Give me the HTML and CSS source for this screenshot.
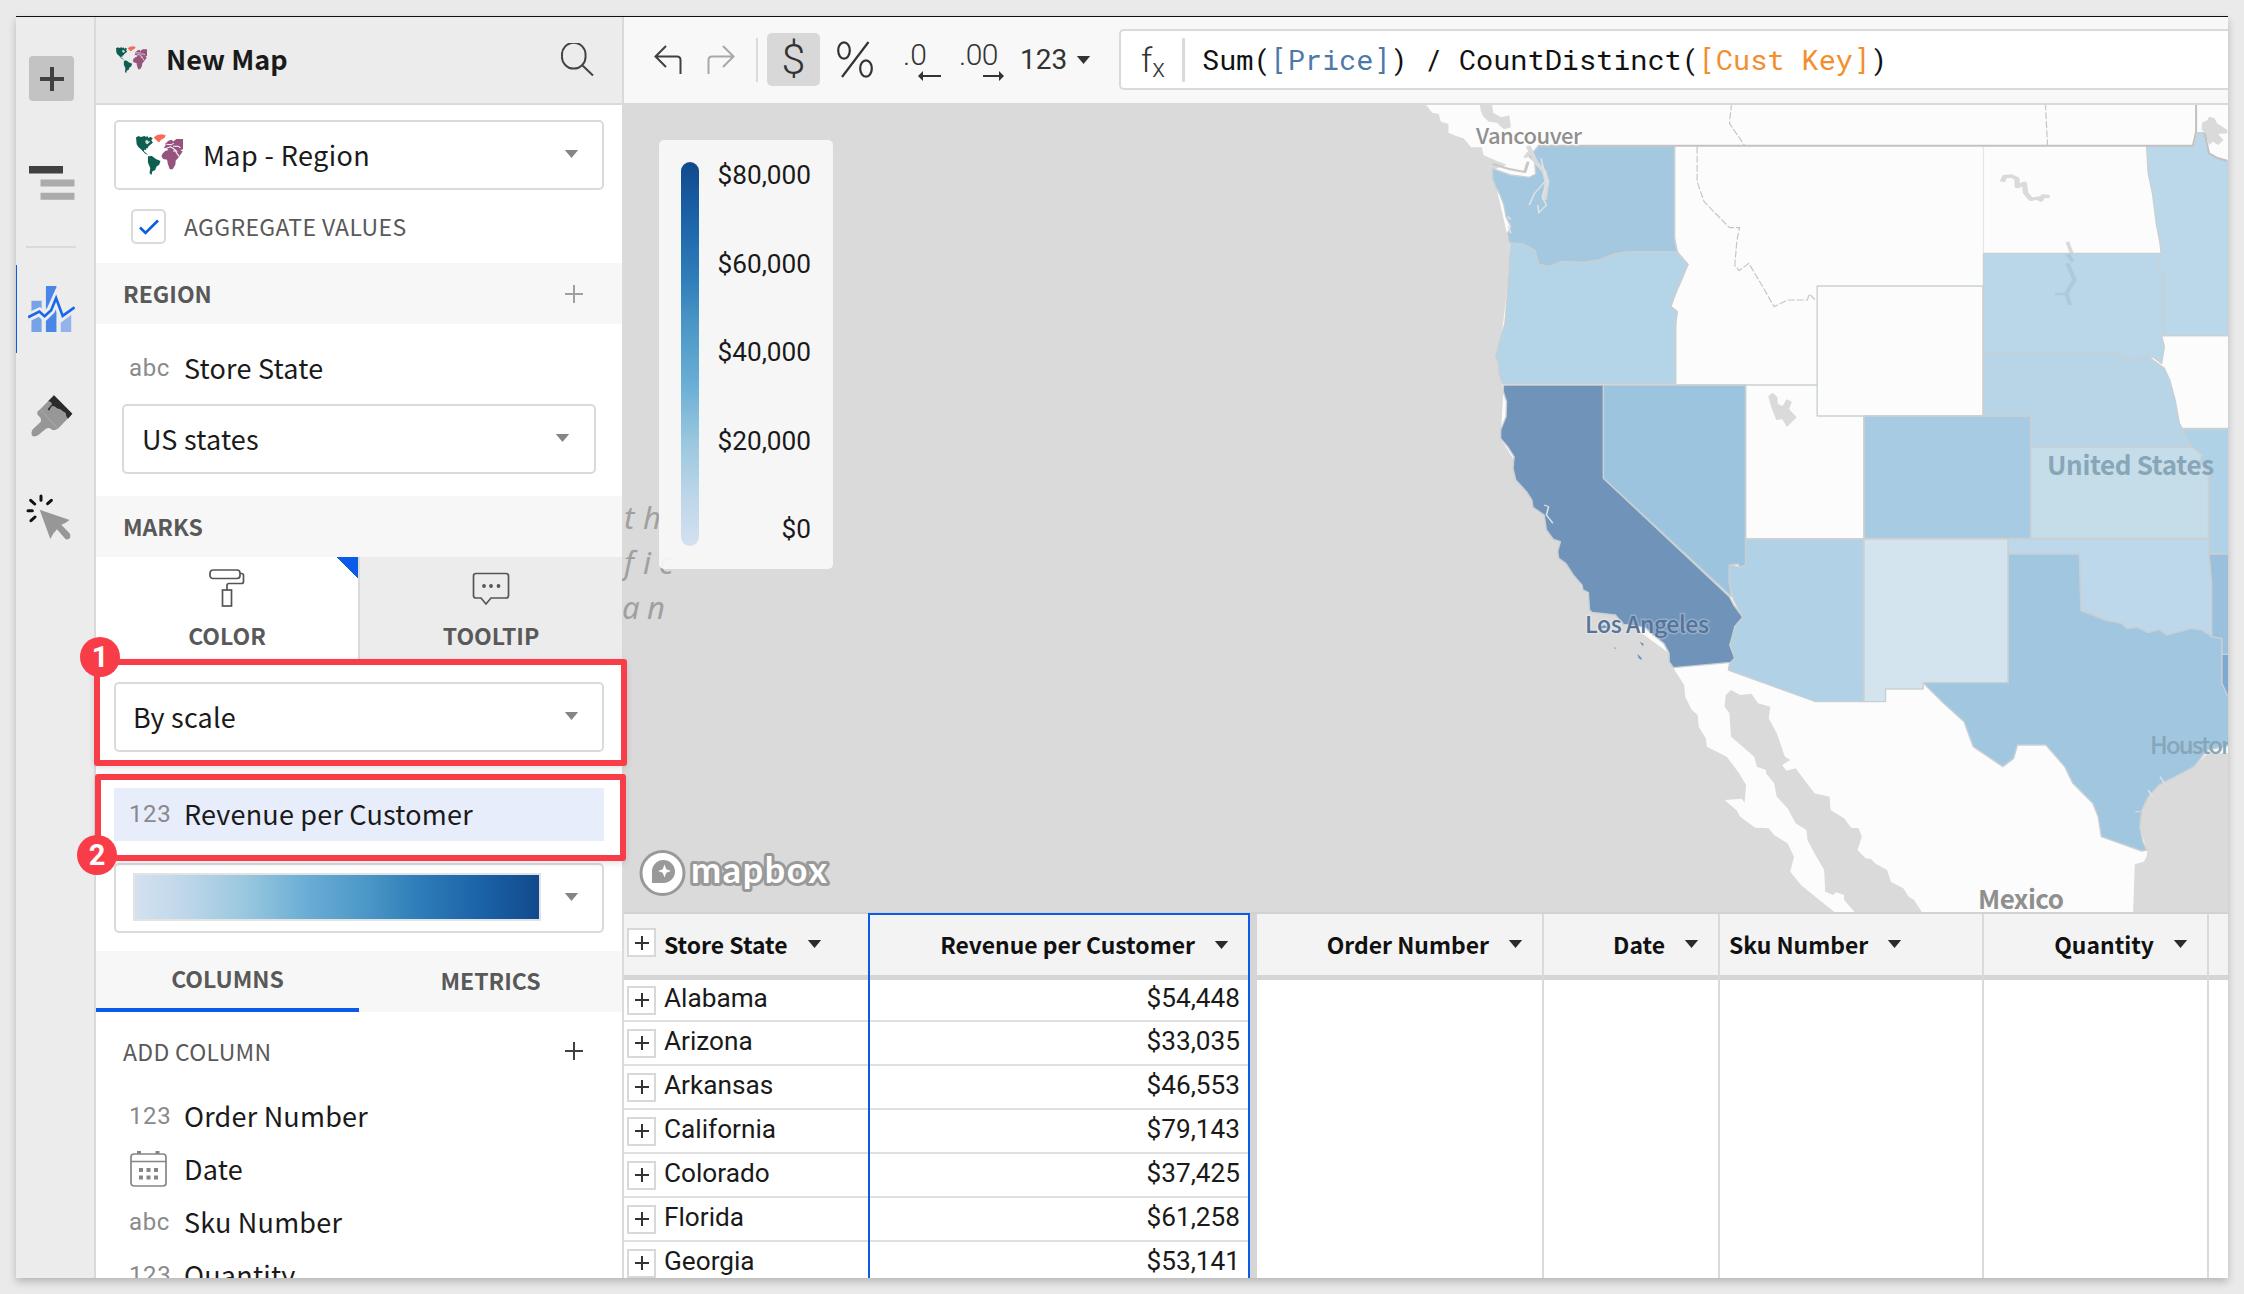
FILE: index.html
```html
<!DOCTYPE html>
<html lang="en">
<head>
<meta charset="utf-8">
<title>New Map</title>
<link rel="stylesheet" href="styles.css">
</head>
<body>
<svg class="defs" aria-hidden="true">
  <symbol id="world" viewBox="0 0 142 121" preserveAspectRatio="none">
    <path fill="#0e5f50" d="M0 10L8 6 14 9 26 6 30 9 34 6 38 12 44 8 51 14 46 18 51 26 45 30 38 36 35 42 30 43 31 48 25 46 24 51 30 56 37 62 28 58 20 50 14 44 7 38 2 30Z"/>
    <path fill="#0e5f50" d="M36 66L48 65 60 74 74 80 70 91 62 96 58 106 49 111 47 121 41 116 43 100 36 84Z"/>
    <path fill="#fff" opacity=".8" d="M28 20l6 -3 3 5 5 -2 -2 6 -6 4 -5 -3z"/>
    <path fill="#f96a58" d="M53 10L64 3 78 1 90 4 86 12 76 17 69 25 61 18Z"/>
    <path fill="#96537e" d="M84 42L90 32 88 29 98 20 108 17 112 22 122 15 142 15 142 45 134 47 141 52 131 66 126 72 120 78 119 90 111 104 102 104 96 88 94 76 82 74 77 66 80 58 88 50 98 47 92 42Z"/>
    <path fill="none" stroke="#fff" stroke-width="3" d="M86 44L104 38 112 42 122 50 112 50M120 52L130 66M92 30L106 32 114 27M112 36h16l6 5"/>
  </symbol>
  <symbol id="caret" viewBox="0 0 15 9"><path fill="currentColor" d="M0 0H15L7.500 9Z"/></symbol>
  <symbol id="plus" viewBox="0 0 18 18"><path fill="none" stroke="currentColor" stroke-width="2" d="M9 0V18M0 9H18"/></symbol>
</svg>

<div class="window">
  <nav class="rail">
    <button class="rail-add"><svg width="24" height="24" viewBox="0 0 24 24"><path stroke="#404040" stroke-width="4" d="M12 0V24M0 12H24"/></svg></button>
    <svg class="rail-outline" width="46" height="34" viewBox="0 0 46 34"><path fill="#404040" d="M0 0h34v7.500H0z"/><path fill="#ababab" d="M11.500 13.500H45.500v7H11.500zM11.500 26.800H45.500v7H11.500z"/></svg>
    <i class="rail-line"></i>
    <div class="rail-active"><svg width="47" height="48" viewBox="36 705 142 146">
      <path fill="#76a2e9" d="M46 753h31v95H46z"/><path fill="#4a86e8" d="M90 708h32v140H90z"/><path fill="#93b3ea" d="M135 780h32v68h-32z"/>
      <path fill="none" stroke="#ececec" stroke-width="26" d="M30 806L70 787 86 800 105 782 121 746 141 799 182 768"/>
      <path fill="none" stroke="#1a68ea" stroke-width="8" d="M36 803L70 786 86 800 106 782 121 745 141 799 177 773"/></svg></div>
    <svg class="rail-brush" width="42" height="42" viewBox="44 1034 126 126"><path fill="#979797" d="M113 1035L168 1090 130 1130Q116 1146 104 1136 96 1130 88 1136L66 1154Q58 1161 48 1157 42 1146 50 1136L72 1116Q78 1106 68 1098 56 1086 70 1078Z"/><path fill="#2b2b2b" d="M113 1035L168 1090 155 1105Q148 1097 148 1088 140 1084 132 1077L122 1074Q113 1064 106 1068L98 1081 94 1077 107 1062Q106 1054 96 1052Z"/><path stroke="#b5b5b5" stroke-width="2" d="M74 1080L126 1136"/></svg>
    <svg class="rail-cursor" width="46" height="46" viewBox="31 1332 138 138"><path fill="#979797" d="M72 1379L162 1410Q150 1420 137 1424L163 1451Q168 1470 150 1468L124 1438Q112 1450 104 1467Z"/><path stroke="#111" stroke-width="9" stroke-linecap="round" d="M76 1338V1351M45 1351L57 1362M107 1351L96 1361M37 1382H50M58 1401L46 1412"/></svg>
  </nav>

  <aside class="panel">
    <header class="panel-head">
      <svg width="31" height="27"><use href="#world"/></svg>
      <h1>New Map</h1>
      <svg class="search" width="33" height="34" viewBox="0 0 33 34"><path fill="none" stroke="#444" stroke-width="2" d="M21 22L32 32.500M24.500 12.700A11.800 11.800 0 1 1 1 12.700A11.800 11.800 0 1 1 24.500 12.700Z"/></svg>
    </header>

    <div class="select with-icon"><svg width="47" height="41"><use href="#world"/></svg><span>Map - Region</span><svg class="caret"><use href="#caret"/></svg></div>
    <label class="check-row"><span class="box"><svg width="20" height="16" viewBox="0 0 20 16"><path fill="none" stroke="#0b5ce8" stroke-width="2.600" d="M1 8.500L6.500 14 19 1.500"/></svg></span><span class="check-text">AGGREGATE VALUES</span></label>

    <div class="section"><b>REGION</b><svg class="plus muted"><use href="#plus"/></svg></div>
    <div class="field store"><i class="kind">abc</i><span>Store State</span></div>
    <div class="select inner"><span>US states</span><svg class="caret"><use href="#caret"/></svg></div>

    <div class="section marks"><b>MARKS</b></div>
    <div class="mark-tabs">
      <div class="mark-tab on"><svg width="36" height="38" viewBox="0 0 36 38"><g fill="none" stroke="#555" stroke-width="1.700"><rect x="1" y="1" width="30" height="8.500" rx="3"/><path d="M31 4.500h1.500q2 0 2 2v6q0 2-2 2H20q-2 0-2 2V21"/><rect x="13.500" y="21" width="9" height="16"/></g></svg><b>COLOR</b></div>
      <div class="mark-tab"><svg width="38" height="38" viewBox="0 0 38 38"><path fill="none" stroke="#555" stroke-width="1.700" d="M4 4.500H34q2.500 0 2.500 2.500V26.500q0 2.500-2.500 2.500H19L14 35 9 29H4Q1.500 29 1.500 26.500V7Q1.500 4.500 4 4.500Z"/><g fill="#555"><circle cx="12" cy="17" r="1.900"/><circle cx="19" cy="17" r="1.900"/><circle cx="26.500" cy="17" r="1.900"/></g></svg><b>TOOLTIP</b></div>
    </div>
    <div class="select scale"><span>By scale</span><svg class="caret"><use href="#caret"/></svg></div>
    <div class="field measure"><i class="kind">123</i><span>Revenue per Customer</span></div>
    <div class="select ramp"><i class="ramp-bar"></i><svg class="caret"><use href="#caret"/></svg></div>

    <div class="list-tabs"><b class="on">COLUMNS</b><b>METRICS</b></div>
    <div class="add-row"><span>ADD COLUMN</span><svg class="plus"><use href="#plus"/></svg></div>
    <div class="field"><i class="kind">123</i><span>Order Number</span></div>
    <div class="field"><i class="kind"><svg class="calendar" width="37" height="37" viewBox="0 0 37 37"><g fill="none" stroke="#858585" stroke-width="1.700"><rect x="1" y="4" width="35" height="32" rx="3"/><path d="M1 11.500H36"/></g><path fill="#858585" d="M7 1h4v3H7zM25.500 1h4v3h-4zM9 18h4v4H9zM16.500 18h4v4h-4zM24 18h4v4h-4zM9 25.500h4v4H9zM16.500 25.500h4v4h-4zM24 25.500h4v4h-4z"/></svg></i><span>Date</span></div>
    <div class="field"><i class="kind">abc</i><span>Sku Number</span></div>
    <div class="field"><i class="kind">123</i><span>Quantity</span></div>
  </aside>

  <main class="main">
    <div class="toolbar">
      <svg class="undo" width="28" height="30" viewBox="0 0 28 30"><path fill="none" stroke="#404040" stroke-width="2" d="M12 1L1.500 11.500 12 22M1.500 11.500H23Q26.500 11.500 26.500 15V29"/></svg>
      <svg class="redo" width="28" height="30" viewBox="0 0 28 30"><path fill="none" stroke="#a8a8a8" stroke-width="2" d="M16 1L26.500 11.500 16 22M26.500 11.500H5Q1.500 11.500 1.500 15V29"/></svg>
      <i class="tb-line"></i>
      <span class="tb-dollar">$</span>
      <svg class="tb-pct" width="36" height="37" viewBox="0 0 36 37"><g fill="none" stroke="#333" stroke-width="2.200"><ellipse cx="7" cy="9.500" rx="5.800" ry="8.200"/><ellipse cx="29" cy="27.500" rx="5.800" ry="8.200"/><path d="M31.500 1L5 36"/></g></svg>
      <span class="tb-dec less">.0<svg width="24" height="10" viewBox="0 0 24 10"><path fill="#333" d="M0 5L5 0V4H23V6H5V10Z"/></svg></span>
      <span class="tb-dec more">.00<svg width="21" height="10" viewBox="0 0 21 10"><path fill="#333" d="M21 5L16 0V4H0V6H16V10Z"/></svg></span>
      <span class="tb-123">123</span>
      <svg class="caret dark"><use href="#caret"/></svg>
      <div class="formula"><span class="fx">f<small>x</small></span><i></i><code>Sum(<span class="price">[Price]</span>) / CountDistinct(<span class="cust">[Cust Key]</span>)</code></div>
    </div>

    <div class="map">
      <svg class="map-canvas" width="1606" height="807" viewBox="0 0 1606 807">
        <g transform="translate(778 -15) scale(.53827 .33333)">
          <path fill="#fcfcfc" d="M46 40L60 68 72 72 76 95 90 102 90 128 103 137 118 145 132 172 152 172 155 195 180 213 205 228 228 237 233 225 230 198 240 180 257 190 172 240 180 300 203 460 203 540 183 820 192 905 187 1045 268 1260 340 1500 500 1690 508 1735 528 1785 530 1820 542 1860 553 1875 555 1910 568 1945 570 1970 607 2000 630 2050 643 2085 640 2138 635 2126 603 2130 625 2160 632 2180 660 2213 685 2215 695 2235 720 2260 732 2300 725 2345 745 2385 775 2425 808 2467H845L825 2430 825 2415 810 2407 805 2415 790 2405 788 2340 770 2290 757 2250 755 2220 735 2200 720 2155 700 2120 695 2080 680 2050 680 2040 663 2030 658 2000 640 1975 615 1940 612 1870 603 1850 605 1815 615 1800 632 1815 653 1811 665 1840 688 1850 685 1885 700 1930 715 2000 725 2010 710 2025 718 2042 735 2035 770 2110 798 2120 800 2160 825 2185 838 2213 852 2215 858 2240 850 2280 865 2305 875 2307 882 2320 905 2340 912 2375 935 2395 945 2420 955 2430 970 2467H1362L1365 2323 1382 2315 1387 2300 1388 2282 1374 2210 1380 2130 1410 2080 1475 2030 1500 1990H1540V40Z"/>
          <path fill="#dadada" d="M148 40H171L173 68 188 82 203 76 206 112 193 118 180 98 165 95 155 80 150 62ZM684 918L693 908 701 922 702 942 711 948 718 928 728 935 723 958 737 982 719 1011 710 988 699 990 691 958ZM1490 98L1500 90 1503 80 1513 84 1518 100 1537 120V130L1520 132 1530 150 1520 165 1510 155 1503 165 1495 128 1489 118Z"/>
          <g fill="none" stroke="#dadada" stroke-linejoin="round">
            <path stroke-width="10" d="M1119 275L1124 259 1136 258 1146 266 1147 290 1160 280 1162 308 1172 328 1186 324 1190 330 1195 318 1207 320"/>
            <path stroke-width="7" d="M1240 455L1250 500"/>
            <path stroke="#c9c9c9" stroke-width="6" d="M172 222L205 238 232 246 238 215"/>
          </g>
          <g fill="none" stroke="#c6c6c6" stroke-width="1.200">
            <path vector-effect="non-scaling-stroke" stroke-dasharray="7 2" d="M616 40L612 100 640 166M1199 40L1203 166M552 170V275L565 335 612 413H631L626 450 622 525 630 542 648 520 672 585 695 650 720 630H757L760 612 773 632"/>
            <path vector-effect="non-scaling-stroke" stroke="#e6e6e6" d="M1084 170V490"/>
          </g>
          <g class="states">
            <path fill="#a3c8e0" d="M257 168H510V445L515 485H425L400 492 370 510 340 517 300 515 278 530 258 523 250 480 230 463 203 458 200 430 206 410 197 380 193 345 186 315 178 290 172 265V236L205 255 240 262 252 252 250 215 240 200Z"/>
            <path fill="#b4d5e8" d="M205 460L230 463 250 480 258 523 278 530 300 515 340 517 370 510 400 492 425 485H515L520 500 535 523 523 570 512 610 503 650 515 665 512 705V881H190L184 850 183 820 178 800 185 755 195 700 200 600 203 540Z"/>
            <path fill="#7093b9" d="M192 885H378V1165L612 1520 620 1545 637 1582 622 1610 620 1640 613 1665 622 1705 615 1717 508 1733 500 1715V1690L490 1660 470 1635 455 1612 415 1603 400 1575 357 1567 352 1560 350 1508 340 1500 338 1485 322 1455 308 1420 295 1405 293 1385 298 1355 285 1348 272 1320 268 1275 247 1252 245 1230 235 1205 215 1170 210 1135 212 1100 200 1070 187 1045V1020L197 980 198 935 192 905Z"/>
            <path fill="#9dc4df" d="M378 885H642V1425L632 1432 628 1422 612 1425 612 1480 616 1520 378 1165Z"/>
            <path fill="#b1d1e6" d="M642 1347H862V1835H772L610 1740 612 1722 622 1705 613 1665 622 1610 637 1582 620 1530 612 1480V1425L632 1432 642 1425Z"/>
            <path fill="#d3e4ef" d="M862 1347H1130V1778H972V1797H902V1835H862Z"/>
            <path fill="#a6cbe3" d="M862 978H1172V1345H862Z"/>
            <path fill="#bad7e9" d="M1084 490H1414L1406 525 1420 555V737H1415L1420 770 1415 820 1400 802 1390 800 1350 808 1330 787H1084Z"/>
            <path fill="#b8d5e7" d="M1084 787H1330L1350 808 1390 800 1420 835 1430 870 1440 930 1448 1000 1458 1030 1472 1072H1172V978H1084Z"/>
            <path fill="#bdd8ea" d="M1130 1347H1502V1392L1508 1480V1640L1490 1620 1470 1615 1425 1635 1410 1618 1390 1628 1370 1612 1350 1615 1340 1600 1310 1590 1290 1575 1265 1562 1262 1392H1130Z"/>
            <path fill="#a1c6e0" d="M1130 1392H1262L1265 1562 1290 1577 1310 1590 1340 1600 1350 1615 1370 1612 1390 1628 1410 1618 1425 1635 1470 1615 1490 1620 1508 1640 1527 1645V1780L1537 1815H1545V1965L1500 1980 1475 2030 1440 2060 1410 2085 1390 2120 1378 2160 1374 2210 1380 2255 1387 2280 1378 2283 1303 2240 1297 2180 1287 2140 1250 2080 1235 2030 1200 1965H1147L1140 2005 1120 2030 1065 1970 1048 1895 1010 1840 985 1800 972 1778H1130Z"/>
            <path fill="#bbd8ea" d="M1387 168H1476L1482 128H1494L1503 190 1520 205 1545 218V737H1420V555L1406 525 1414 490 1412 460 1405 400 1398 310 1390 250Z"/>
            <path fill="#b0d2e6" d="M1455 1017H1545V1390H1503V1150L1485 1115 1490 1095 1472 1072 1458 1035Z"/>
            <path fill="#9ac0de" d="M1503 1392H1545V1693H1527V1645L1508 1640V1480Z"/>
            <path fill="#7ea9d0" d="M1527 1693H1545V1815H1537L1527 1780Z"/>
            <path fill="#c5dde9" d="M1172 1072H1472L1490 1095 1485 1115 1502 1150V1345H1172Z"/>
            <path fill="none" d="M512 885H775M510 168V445L515 485 535 523 512 610 503 650 515 665 512 705V881M775 588H1083V978H775ZM642 885V1347H862V978H775V632M1415 737H1545M1455 1015H1545"/>
          </g>
          <path fill="none" stroke="#c2c2c2" stroke-width="2" vector-effect="non-scaling-stroke" d="M257 167H1473L1479 125V40M1495 130L1503 190 1520 205 1537 212"/>
          <path fill="none" stroke="#9db9c9" stroke-width="8" opacity=".45" d="M1240 492L1250 515M1240 520L1253 570 1238 610 1245 645M1217 612H1238"/>
          <path fill="none" stroke="#dadada" stroke-width="9" d="M238 168L252 215 268 245 273 275 268 330"/>
          <path fill="none" stroke="#dfe3e6" stroke-width="3" d="M262 205L272 270 250 310 240 345M276 270L264 320 272 345 258 368 256 345M200 380L206 388M201 408L206 430M268 1245L276 1250 272 1275 284 1300M1412 2060L1420 2080M1390 2100L1398 2120M1366 2165H1376"/>
          <path fill="#7093b9" d="M368 1610l12-4 6 6-14 4zM445 1655l8 6-2 8zM441 1692l8 12v6l-6-6zM398 1672l4 2-3 3z"/>
        </g>
        <g class="labels">
          <text x="854" y="39" font-size="22" textLength="106">Vancouver</text>
          <text x="1425" y="370" font-size="26" textLength="167" class="country over">United States</text>
          <text x="963" y="528" font-size="23" textLength="124" class="la">Los Angeles</text>
          <text x="1528" y="649" font-size="24" textLength="86" class="over">Houston</text>
          <text x="1356" y="804" font-size="26" textLength="86" class="country">Mexico</text>
          <g class="ocean"><text x="2 21" y="424">th</text><text x="2 21 37" y="469">fic</text><text x="0 25" y="514">an</text></g>
        </g>
        <g class="logo"><circle cx="40.500" cy="768" r="21.500"/><path fill="#999" stroke="none" d="M30 778V767A11.500 11.500 0 1 1 41.500 778Z"/><path fill="#fff" stroke="none" d="M42.500 759.500L44.300 764.200 49 766 44.300 767.800 42.500 772.500 40.700 767.800 36 766 40.700 764.200Z"/><text x="69" y="778" textLength="136">mapbox</text></g>
      </svg>
      <div class="legend"><i></i><ol><li>$80,000</li><li>$60,000</li><li>$40,000</li><li>$20,000</li><li>$0</li></ol></div>
    </div>

    <div class="table">
      <div class="col store-col">
        <div class="th"><i class="exp"></i>Store State<svg class="caret"><use href="#caret"/></svg></div>
        <div class="td"><i class="exp"></i><span>Alabama</span></div>
        <div class="td"><i class="exp"></i><span>Arizona</span></div>
        <div class="td"><i class="exp"></i><span>Arkansas</span></div>
        <div class="td"><i class="exp"></i><span>California</span></div>
        <div class="td"><i class="exp"></i><span>Colorado</span></div>
        <div class="td"><i class="exp"></i><span>Florida</span></div>
        <div class="td"><i class="exp"></i><span>Georgia</span></div>
      </div>
      <div class="col revenue-col num">
        <div class="th">Revenue per Customer<svg class="caret"><use href="#caret"/></svg></div>
        <div class="td"><span>$54,448</span></div>
        <div class="td"><span>$33,035</span></div>
        <div class="td"><span>$46,553</span></div>
        <div class="td"><span>$79,143</span></div>
        <div class="td"><span>$37,425</span></div>
        <div class="td"><span>$61,258</span></div>
        <div class="td"><span>$53,141</span></div>
      </div>
      <i class="freeze"></i>
      <div class="col num c-order"><div class="th">Order Number<svg class="caret"><use href="#caret"/></svg></div></div>
      <div class="col num c-date"><div class="th">Date<svg class="caret"><use href="#caret"/></svg></div></div>
      <div class="col c-sku"><div class="th">Sku Number<svg class="caret"><use href="#caret"/></svg></div></div>
      <div class="col num c-qty"><div class="th">Quantity<svg class="caret"><use href="#caret"/></svg></div></div>
      <div class="col c-rest"><div class="th"></div></div>
    </div>
  </main>
</div>

<div class="callout one"><b>1</b></div>
<div class="callout two"><b>2</b></div>
</body>
</html>
```
FILE: styles.css
```css
* { box-sizing: border-box; }
body {
  margin: 0; width: 2244px; height: 1294px; padding: 16px; overflow: hidden;
  background: #eaeaea; color: #1a1a1a;
  font-family: "Noto Sans CJK SC", "Noto Sans", sans-serif; font-size: 27px; line-height: 1;
}
i { font-style: normal; }
svg { display: block; flex: none; }
.defs { position: absolute; width: 0; height: 0; }
.window {
  width: 2212px; height: 1262px; display: flex; overflow: hidden;
  border-top: 1px solid #111; background: #fff; box-shadow: 0 4px 8px rgba(0,0,0,.22);
}
.caret { width: 15px; height: 8px; color: #858585; margin-left: auto; }
.plus { width: 18px; height: 18px; color: #404040; margin-left: auto; }
.plus.muted { color: #a0a0a0; }

/* icon rail */
.rail { width: 80px; flex: none; background: #ececec; border-right: 2px solid #dadada; display: flex; flex-direction: column; align-items: flex-start; }
.rail-add { width: 45px; height: 45px; margin: 39px 0 0 13px; padding: 0; border: 0; border-radius: 4px; background: #c3c3c3; display: grid; place-items: center; }
.rail-outline { margin: 65px 0 0 13px; }
.rail-line { width: 50px; height: 2px; background: #dadada; margin: 46px 0 0 10px; }
.rail-active { height: 88px; width: 78px; margin-top: 17px; border-left: 1px solid #0b5ae8; padding: 20px 0 0 11px; }
.rail-brush { margin: 42px 0 0 15px; }
.rail-cursor { margin: 57px 0 0 10px; }

/* settings panel */
.panel { width: 528px; flex: none; display: flex; flex-direction: column; background: #fff; overflow: hidden; border-right: 2px solid #dadada; }
.panel > * { flex: none; }
.panel-head { height: 88px; background: #ececec; border-bottom: 2px solid #dadada; padding: 0 28px 2px 20px; display: flex; align-items: center; }
.panel-head h1 { margin: 0 0 0 19px; font-size: 27px; font-weight: 600; line-height: 36px; }
.panel-head .search { margin: 2px 0 0 auto; }
.select { height: 70px; margin: 15px 18px 0; border: 2px solid #dadada; border-radius: 5px; padding: 0 23px 2px 17px; display: flex; align-items: center; background: #fff; }
.select span, .field span { letter-spacing: .2px; }
.select.with-icon { padding-left: 20px; }
.select.with-icon span { margin-left: 20px; letter-spacing: .4px; }
.check-row { height: 73px; padding: 0 0 0 35px; display: flex; align-items: center; gap: 18px; font-size: 23px; color: #595959; }
.check-text { letter-spacing: .35px; padding-bottom: 1px; }
.box { width: 35px; height: 35px; border: 2px solid #dadada; border-radius: 5px; display: grid; place-items: center; }
.section { height: 61px; background: #f7f7f7; padding: 0 39px 0 27px; display: flex; align-items: center; font-size: 23px; color: #595959; }
.section b, .mark-tab b, .list-tabs b { font-weight: 600; }
.section b { padding-bottom: 1px; }
.field { height: 53px; padding: 0 0 2px 33px; display: flex; align-items: center; }
.field .kind { width: 55px; flex: none; color: #8a8a8a; font: 400 24px/1 Roboto, sans-serif; letter-spacing: .6px; }
.calendar { margin-left: 1px; }
.field.store { margin: 18px 0 9px; }
.select.inner { margin: 0 26px; padding-left: 18px; padding-right: 24px; }
.section.marks { margin-top: 22px; }
.mark-tabs { height: 103px; display: flex; }
.mark-tab { flex: 1; background: #ececec; display: flex; flex-direction: column; align-items: center; padding-top: 12px; font-size: 23px; color: #595959; }
.mark-tab b { margin-top: 17px; }
.mark-tab.on { background: linear-gradient(45deg, transparent 50%, #0b5ae8 50%) right top / 22px 21px no-repeat #fff; border-right: 2px solid #dadada; background-origin: padding-box; }
.select.scale { margin-top: 22px; }
.field.measure { margin: 36px 18px 0; padding-left: 15px; background: #e7edfb; }
.select.ramp { margin-top: 22px; padding-left: 17px; }
.ramp-bar { width: 408px; height: 48px; border: 2px solid #e3e3e3; background: linear-gradient(90deg, #d3e1f0, #bfd7ea 12%, #9ac8de 27%, #6baed6 42%, #4a96c6 58%, #2f7db9 70%, #1c63a8 85%, #114a8d); }
.list-tabs { height: 61px; margin-top: 18px; background: #f7f7f7; display: flex; font-size: 23px; color: #595959; line-height: 55px; text-align: center; }
.list-tabs b { flex: 1; padding-top: 2px; }
.list-tabs .on { border-bottom: 4px solid #0b5ae8; padding-top: 0; }
.add-row { height: 78px; padding: 0 39px 0 27px; display: flex; align-items: center; font-size: 23px; letter-spacing: .3px; color: #595959; }

/* toolbar */
.main { flex: 1; min-width: 0; display: flex; flex-direction: column; }
.toolbar { height: 88px; flex: none; background: #f8f8f8; border-bottom: 2px solid #dadada; padding: 0 0 1px 30px; display: flex; align-items: center; font-family: Roboto, sans-serif; color: #333; }
.redo { margin-left: 25px; }
.tb-line { width: 2px; height: 44px; background: #dadada; margin-left: 21px; }
.tb-dollar { width: 53px; height: 53px; margin-left: 9px; border-radius: 5px; background: #d8d8d8; font-size: 43px; font-weight: 300; text-align: center; line-height: 53px; }
.tb-pct { margin: 0 10px 0 17px; }
.tb-dec { font-size: 30px; font-weight: 300; height: 40px; line-height: 30px; display: flex; flex-direction: column; }
.tb-dec svg { margin: 1px 0 0 auto; }
.less { width: 39px; margin-left: 20px; }
.more { width: 45px; margin-left: 17px; letter-spacing: -.5px; }
.tb-123 { width: 49px; margin-left: 16px; font-size: 28px; }
.toolbar .caret { margin-left: 7px; color: #333; }
.formula { flex: 1; height: 61px; margin-left: 28px; background: #fff; border: 2px solid #dadada; border-right: 0; border-radius: 5px 0 0 5px; display: flex; align-items: center; }
.fx { width: 41px; margin-left: 20px; font-size: 34px; font-weight: 300; white-space: nowrap; }
.fx small { font-size: 26px; position: relative; top: 5px; }
.formula i { width: 3px; height: 44px; background: #dadada; }
.formula code { margin-left: 17px; padding-bottom: 1px; font: 28.55px/1 "Roboto Mono", "Liberation Mono", monospace; color: #111; white-space: pre; }
.price { color: #4e79a7; }
.cust { color: #f28e2b; }

/* map */
.map { height: 807px; flex: none; margin-left: -2px; background: #dadada; position: relative; overflow: hidden; }
.states path { stroke: #c9d0d3; stroke-width: 1.4; vector-effect: non-scaling-stroke; stroke-linejoin: round; }
.labels { font-family: "Noto Sans CJK SC", sans-serif; fill: #8f8f8f; font-weight: 500; }
.labels text { stroke: rgba(252,252,252,.7); stroke-width: 3px; paint-order: stroke; }
.labels .country { font-weight: 700; }
.labels .over { fill: #87a6b8; stroke: none; }
.labels .la { fill: #56749a; stroke: rgba(252,252,252,.25); }
.labels .ocean { font: italic 400 31px "Noto Sans", sans-serif; fill: #a0a0a0; }
.labels .ocean text { stroke: none; }
.logo circle { fill: #fff; stroke: #999; stroke-width: 3px; }
.logo text { font: 700 36px Lato, sans-serif; fill: #fff; stroke: #999; stroke-width: 6px; paint-order: stroke; stroke-linejoin: round; }
.legend { position: absolute; left: 37px; top: 35px; width: 174px; height: 429px; border-radius: 5px; background: rgba(248,248,248,.92); padding: 22px 22px 0 22px; display: flex; justify-content: space-between; }
.legend i { width: 18px; height: 384px; border-radius: 9px; background: linear-gradient(0deg, #d3e1f0, #bfd7ea 12%, #9ac8de 27%, #6baed6 42%, #4a96c6 58%, #2f7db9 70%, #1c63a8 85%, #114a8d); }
.legend ol { margin: 0; padding: 0; list-style: none; text-align: right; font: 26.2px/26px Roboto, sans-serif; }
.legend li { height: 88.6px; }

/* table */
.table { flex: 1; display: flex; border-top: 2px solid #d2d2d2; position: relative; }
.col { flex: none; border-right: 2px solid #dadada; }
.th { height: 66px; background: #f3f3f3; border-bottom: 5px solid #d5d5d5; padding-bottom: 1px; display: flex; align-items: center; font-size: 22.9px; font-weight: 600; color: #111; white-space: nowrap; }
.th .caret { margin-left: 19px; width: 15px; height: 8px; color: #2b2b2b; }
.td { height: 44px; border-bottom: 2px solid #e0e0e0; display: flex; align-items: center; font: 26.2px/36px Roboto, sans-serif; }
.th + .td { height: 42px; }
.td span { padding-bottom: 5px; }
.exp { width: 29px; height: 29px; flex: none; margin: 0 8px 0 3px; border: 2px solid #d8d8d8; background: linear-gradient(#333,#333) center / 14px 2px no-repeat, linear-gradient(#333,#333) center / 2px 14px no-repeat, #fff; }
.th .exp { margin-bottom: 3px; }
.num .th { justify-content: flex-end; padding-right: 19px; }
.num .td { justify-content: flex-end; padding-right: 8px; }
.store-col { width: 244px; border: 0; }
.revenue-col { width: 382px; border: 2px solid #0b5ae8; border-bottom: 0; margin-top: -1px; }
.revenue-col .th { height: 65px; }
.freeze { width: 7px; background: #d5d5d5; }
.c-order { width: 287px; }
.c-date { width: 176px; }
.c-sku { width: 264px; }
.c-sku .th { padding-left: 9px; }
.c-qty { width: 225px; }
.c-rest { flex: 1; border: 0; }

/* numbered highlights */
.callout { position: absolute; border: 6px solid #f83c48; border-radius: 3px; box-shadow: 0 2px 6px rgba(0,0,0,.12); }
.callout b { position: absolute; width: 40px; height: 40px; border-radius: 50%; background: #f83c48; color: #fff; font: 700 29px/40px Roboto, sans-serif; text-align: center; }
.callout.one { left: 94px; top: 659px; width: 533px; height: 107px; }
.callout.one b { left: -20px; top: -28px; }
.callout.two { left: 95px; top: 774px; width: 531px; height: 87px; }
.callout.two b { left: -24px; top: 55px; }
```
